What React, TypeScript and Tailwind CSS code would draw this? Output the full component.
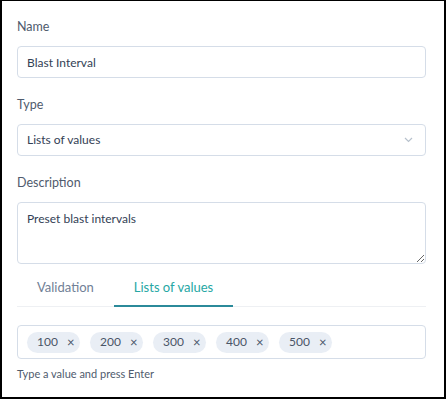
import { useState } from "react";

const values = ["100", "200", "300", "400", "500"];

function Label({ children }: { children: string }) {
  return (
    <label className="block text-[12.5px] leading-5 text-[#4f5b6d] mb-[9px]">
      {children}
    </label>
  );
}

function App() {
  const [tab, setTab] = useState("lists");

  return (
    <div className="w-[446px] h-[399px] bg-white border-x-2 border-t border-b-2 border-black font-['Lato',sans-serif] pl-[15px] pr-[18px] pt-[16px]">
      {/* name */}
      <Label>Name</Label>
      <input
        className="w-full h-8 px-[9px] border border-[#d5dde8] rounded text-[12px] text-[#334155] outline-none"
        defaultValue="Blast Interval"
      />

      {/* type */}
      <div className="mt-[17px]">
        <Label>Type</Label>
        <div className="h-8 px-[9px] border border-[#d5dde8] rounded flex items-center justify-between text-[12px] text-[#334155]">
          <span>Lists of values</span>
          <svg width="9" height="6" viewBox="0 0 9 6" className="mr-[3px]">
            <path d="M1 1l3.5 3.5L8 1" fill="none" stroke="#b7c1cc" strokeWidth="1.2" />
          </svg>
        </div>
      </div>

      {/* description */}
      <div className="mt-[17px]">
        <Label>Description</Label>
        <textarea
          className="block w-full h-[62px] px-[9px] py-[8px] border border-[#d5dde8] rounded text-[12px] leading-4 text-[#334155] outline-none"
          defaultValue="Preset blast intervals"
        />
      </div>

      {/* tabs */}
      <div className="mt-1 flex border-b border-[#eef0f3]">
        <button
          onClick={() => setTab("validation")}
          className={
            tab === "validation"
              ? "px-5 pt-[9px] pb-[8px] text-[13px] leading-5 text-[#26a7a4] border-b-2 border-[#2b8a9a] -mb-px"
              : "px-5 pt-[9px] pb-[8px] text-[13px] leading-5 text-[#718096] border-b-2 border-transparent -mb-px"
          }
        >
          Validation
        </button>
        <button
          onClick={() => setTab("lists")}
          className={
            tab === "lists"
              ? "px-5 pt-[9px] pb-[8px] text-[13px] leading-5 text-[#26a7a4] border-b-2 border-[#2b8a9a] -mb-px"
              : "px-5 pt-[9px] pb-[8px] text-[13px] leading-5 text-[#718096] border-b-2 border-transparent -mb-px"
          }
        >
          Lists of values
        </button>
      </div>

      {/* values */}
      <div className="mt-[18px] h-[34px] border border-[#d5dde8] rounded pl-[9px] flex items-center gap-[10px]">
        {values.map((v) => (
          <span
            key={v}
            className="h-[21px] w-[53px] rounded-full bg-[#e9eef5] flex items-center pl-[10px] text-[12px] text-[#4a5568]"
          >
            {v}
            <span className="ml-[9px] text-[13px] leading-none">×</span>
          </span>
        ))}
      </div>
      <p className="mt-[7px] text-[11px] leading-4 text-[#4f5b6d]">Type a value and press Enter</p>
    </div>
  );
}

export default App;
